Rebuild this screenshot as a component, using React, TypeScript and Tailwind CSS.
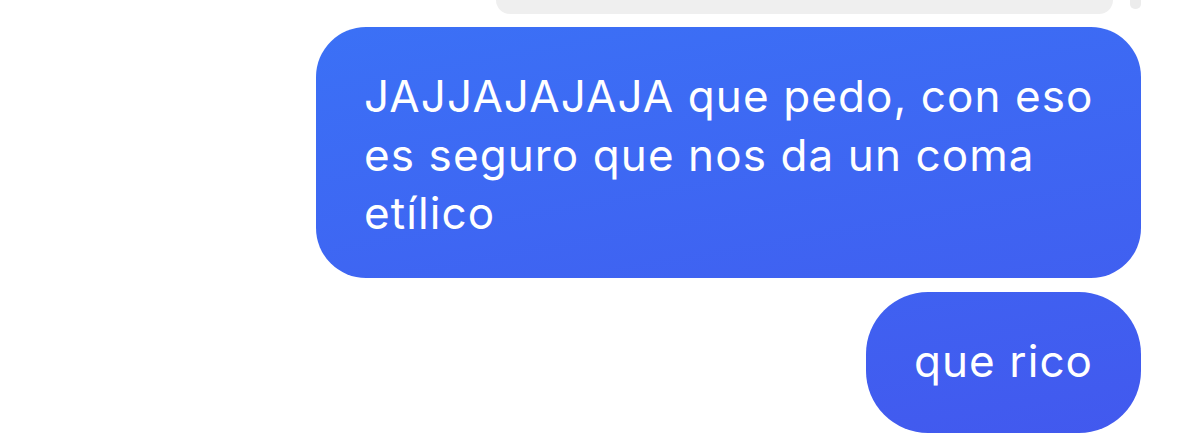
import React from "react";

export default function App() {
  return (
    <div className="w-[1179px] h-[445px] overflow-hidden bg-white font-['Inter','Liberation_Sans',sans-serif]">
      <div className="flex flex-col items-end">
        <div className="flex items-start">
          <div className="w-[617px] h-[14px] rounded-b-[30px] bg-[#efefef]" />
          <div className="ml-[17px] mr-[38px] w-[11px] h-[9px] rounded-b-[5px] bg-[#ececec]" />
        </div>
        <div className="mt-[13px] mr-[38px] w-[825px] rounded-[50px] pl-[48px] pt-[40px] pb-[35px] text-white text-[44px] leading-[58.5px] tracking-[1.1px] bg-fixed bg-[linear-gradient(170deg,#3a74f7,#4258ee)]">
          JAJJAJAJAJA que pedo, con eso
          <br />
          es seguro que nos da un coma
          <br />
          etílico
        </div>
        <div className="mt-[14px] mr-[38px] w-[275px] h-[141px] rounded-[62px] flex items-center justify-center pb-[2px] text-white text-[44px] tracking-[1.1px] bg-fixed bg-[linear-gradient(170deg,#3a74f7,#4258ee)]">
          que rico
        </div>
      </div>
    </div>
  );
}
